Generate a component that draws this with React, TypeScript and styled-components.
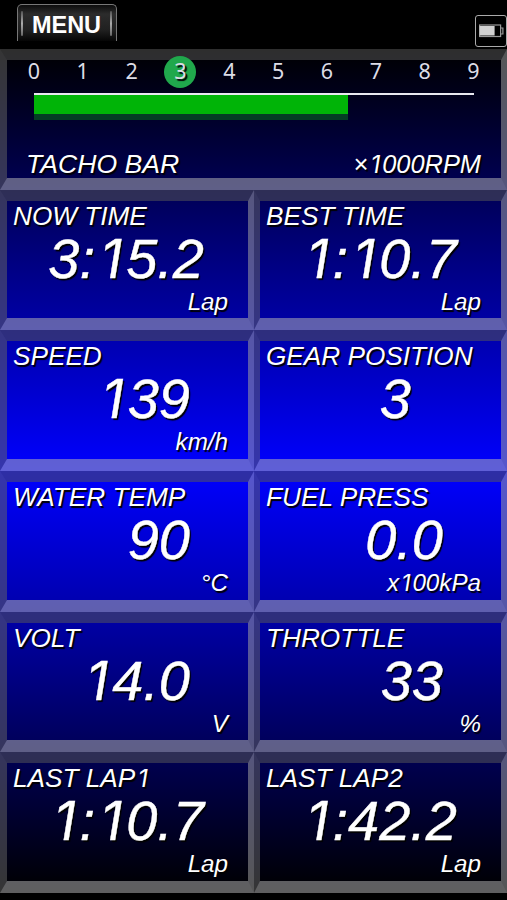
import React from 'react';
import styled, { createGlobalStyle } from 'styled-components';

const GlobalStyle = createGlobalStyle`
  * { box-sizing: border-box; }
  body { margin: 0; background: #000; overflow: hidden; }
`;

const Screen = styled.div`
  width: 507px;
  height: 900px;
  background: #000;
  color: #fff;
  font-family: 'Liberation Sans', Arial, sans-serif;
  overflow: hidden;
`;

const TopBar = styled.header`
  height: 49px;
  padding: 4px 0 0 17px;
  display: flex;
  justify-content: space-between;
  align-items: flex-start;
`;

const MenuButton = styled.button`
  width: 100px;
  height: 37px;
  padding: 3px 4px 0 3px;
  display: flex;
  align-items: center;
  justify-content: space-between;
  border: 1.5px solid #777;
  border-bottom: 0;
  border-radius: 5px 5px 0 0;
  background: linear-gradient(#0c0c0c, #2c2c2c 25%, #202020 70%, #050505);
  color: #fff;
  font: bold 23.5px/36px 'Liberation Sans', sans-serif;
`;

const Notch = styled.span`
  width: 2px;
  height: 25px;
  margin-bottom: 2px;
  border-radius: 1px;
  background: linear-gradient(#555, #aaa 50%, #666);
`;

const BatteryBox = styled.div`
  width: 32px;
  height: 32px;
  margin-top: 11px;
  border: 1px solid #aaa;
  border-radius: 3px;
  display: flex;
  align-items: center;
  justify-content: center;
`;

const Dashboard = styled.main`
  height: 844px;
  display: grid;
  grid-template-columns: 254px 253px;
  grid-template-rows: repeat(6, 140.667px);
  background: linear-gradient(#000, #00f 50%, #000);
`;

const Panel = styled.section<{ $wide?: boolean; $first?: boolean }>`
  grid-column: ${(p) => (p.$wide ? '1 / -1' : 'auto')};
  display: flex;
  flex-direction: column;
  min-width: 0;
  border-style: solid;
  border-width: 11px 6px 12px ${(p) => (p.$first ? '7px' : '6px')};
  border-color: rgba(87, 87, 87, 0.53) rgba(162, 162, 162, 0.53) rgba(180, 180, 180, 0.53)
    rgba(100, 100, 100, 0.53);
  text-shadow: 1.5px 1.5px 1px #000;
  font-style: italic;
  white-space: nowrap;
`;

const Title = styled.h2`
  margin: 0;
  padding: 1px 0 0 6px;
  height: 30px;
  font-size: 26.2px;
  line-height: 29px;
  font-weight: 400;
`;

const Value = styled.div<{ $inset?: number }>`
  height: 56px;
  padding-right: ${(p) => p.$inset ?? 58}px;
  text-align: right;
  font-size: 56px;
  line-height: 56px;
  -webkit-text-stroke: 0.4px #fff;
`;

const Unit = styled.div`
  padding-right: 20px;
  text-align: right;
  font-size: 24.2px;
  line-height: 30px;
`;

const One = styled.span`
  display: inline-block;
  width: 0.585em;
  padding-left: 0.03em;
  font-family: Inter, sans-serif;
  font-size: 0.95em;
  line-height: 0;
  text-align: center;
`;

const Scale = styled.div`
  display: grid;
  grid-template-columns: repeat(10, 48.85px);
  margin-left: 2.5px;
  height: 32px;
  margin-top: -4px;
`;

const Tick = styled.span<{ $active?: boolean }>`
  justify-self: center;
  width: 32px;
  height: 32px;
  border-radius: 50%;
  background: ${(p) => (p.$active ? '#20a84c' : 'transparent')};
  color: #dcdce6;
  font: normal 21.5px/29px 'Noto Sans', sans-serif;
  text-align: center;
  text-shadow: ${(p) => (p.$active ? '2px 2px 1px #000' : 'none')};
`;

const Gauge = styled.div`
  margin: 5px 27px 0;
  height: 27px;
  border-top: 2px solid #e8e8f0;
`;

const Fill = styled.div`
  width: 314px;
  height: 25px;
  background: #00b407;
  border-bottom: 6px solid #043d24;
`;

const TachoFooter = styled.div`
  margin-top: 29px;
  padding: 0 20px 0 19px;
  display: flex;
  justify-content: space-between;
  line-height: 30px;
`;

const Label = styled.span<{ $size: number }>`
  font-size: ${(p) => p.$size}px;
`;

/* Sets every "1" in a footless form on the same advance as the other digits. */
function Glyphs({ text }: { text: string }) {
  return (
    <>
      {text.split(/(1)/).map((part, i) => (part === '1' ? <One key={i}>1</One> : part))}
    </>
  );
}

type Reading = { title: string; value: string; unit?: string; inset?: number };

const readings: Reading[] = [
  { title: 'NOW TIME', value: '3:15.2', unit: 'Lap', inset: 44 },
  { title: 'BEST TIME', value: '1:10.7', unit: 'Lap', inset: 44 },
  { title: 'SPEED', value: '139', unit: 'km/h' },
  { title: 'GEAR POSITION', value: '3', inset: 90 },
  { title: 'WATER TEMP', value: '90', unit: '°C' },
  { title: 'FUEL PRESS', value: '0.0', unit: 'x100kPa' },
  { title: 'VOLT', value: '14.0', unit: 'V' },
  { title: 'THROTTLE', value: '33', unit: '%' },
  { title: 'LAST LAP1', value: '1:10.7', unit: 'Lap', inset: 44 },
  { title: 'LAST LAP2', value: '1:42.2', unit: 'Lap', inset: 44 },
];

export default function App() {
  return (
    <Screen>
      <GlobalStyle />
      <TopBar>
        <MenuButton><Notch />MENU<Notch /></MenuButton>
        <BatteryBox>
          <svg width="26" height="14" viewBox="0 0 26 14">
            <rect x="1.6" y="1" width="21" height="11.5" fill="none" stroke="#999" strokeWidth="1.2" />
            <rect x="1.6" y="2" width="15" height="9.5" fill="#d2d2d2" />
            <path d="M22.6 4h2.3v6h-2.3" fill="none" stroke="#999" strokeWidth="1.2" />
          </svg>
        </BatteryBox>
      </TopBar>
      <Dashboard>
        <Panel $wide $first>
          <Scale>
            {Array.from({ length: 10 }, (_, i) => (
              <Tick key={i} $active={i === 3}>{i}</Tick>
            ))}
          </Scale>
          <Gauge><Fill /></Gauge>
          <TachoFooter>
            <Label $size={26.6}>TACHO BAR</Label>
            <Label $size={25.4}><Glyphs text="×1000RPM" /></Label>
          </TachoFooter>
        </Panel>
        {readings.map((r, i) => (
          <Panel key={r.title} $first={i % 2 === 0}>
            <Title><Glyphs text={r.title} /></Title>
            <Value $inset={r.inset}><Glyphs text={r.value} /></Value>
            {r.unit && <Unit><Glyphs text={r.unit} /></Unit>}
          </Panel>
        ))}
      </Dashboard>
    </Screen>
  );
}
